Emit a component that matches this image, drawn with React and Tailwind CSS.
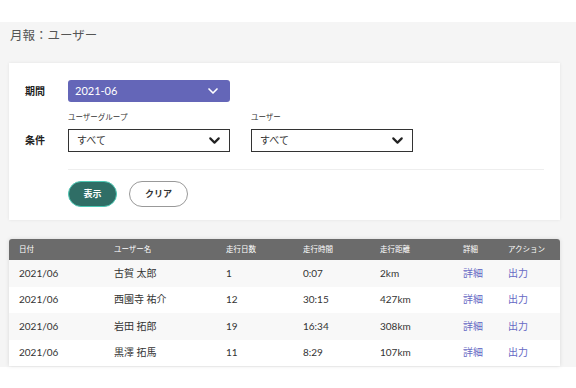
import { ChevronDown } from 'lucide-react'

const FONT = { fontFamily: 'Lato, "Noto Sans CJK JP", sans-serif' }

const ROWS = [
  { date: '2021/06', name: '古賀 太郎', days: '1', time: '0:07', dist: '2km' },
  { date: '2021/06', name: '西園寺 祐介', days: '12', time: '30:15', dist: '427km' },
  { date: '2021/06', name: '岩田 拓郎', days: '19', time: '16:34', dist: '308km' },
  { date: '2021/06', name: '黒澤 拓馬', days: '11', time: '8:29', dist: '107km' },
]

function Select({ value }) {
  return (
    <div className="w-[162px] h-[23px] border-[1.5px] border-[#333] bg-white flex items-center justify-between pl-[8px] pr-[6px]">
      <span className="text-[10px] text-[#333]">{value}</span>
      <ChevronDown size={17} strokeWidth={3} className="text-[#222]" />
    </div>
  )
}

export default function App() {
  return (
    <div style={FONT} className="w-[576px] h-[388px] bg-white overflow-hidden">
      <div className="mt-[22px] h-[345px] bg-[#f5f5f5] pt-[5px]">
        <h1 className="pl-[10px] text-[12.5px] leading-[18px] text-[#555]">月報：ユーザー</h1>

        {/* Search card */}
        <div className="ml-[9px] mr-[16px] mt-[18px] bg-white shadow-[0_0_3px_rgba(0,0,0,0.08)] px-[16px] pt-[17px] pb-[13px]">
          <div className="flex items-center">
            <div className="w-[43px] text-[10px] font-bold text-[#222]">期間</div>
            <div className="w-[162px] h-[22px] rounded-[3px] bg-[#6466b8] flex items-center justify-between pl-[7px] pr-[9px]">
              <span className="text-[11px] text-white">2021-06</span>
              <ChevronDown size={16} strokeWidth={2.5} className="text-white" />
            </div>
          </div>

          <div className="flex items-end mt-[11px]">
            <div className="w-[43px] h-[23px] flex items-center text-[10px] font-bold text-[#222]">条件</div>
            <div className="flex gap-[21px]">
              <div>
                <div className="text-[7.5px] leading-[10px] mb-[6px] text-[#333]">ユーザーグループ</div>
                <Select value="すべて" />
              </div>
              <div>
                <div className="text-[7.5px] leading-[10px] mb-[6px] text-[#333]">ユーザー</div>
                <Select value="すべて" />
              </div>
            </div>
          </div>

          <div className="ml-[43px] mt-[17px] h-[1px] bg-[#eeeeee]" />

          <div className="ml-[43px] mt-[11px] flex gap-[12px]">
            <button className="w-[49px] h-[26px] rounded-full bg-[#2f6e66] border-[1.5px] border-[#4cc8b4] text-white text-[9px] font-bold">
              表示
            </button>
            <button className="w-[59px] h-[26px] rounded-full bg-white border-[1.5px] border-[#999] text-[#333] text-[9px] font-bold">
              クリア
            </button>
          </div>
        </div>

        {/* Table */}
        <div className="ml-[9px] mr-[16px] mt-[19px] shadow-[0_0_4px_rgba(0,0,0,0.12)] rounded-t-[3px] overflow-hidden">
          <div className="h-[21px] bg-[#6b6b6b] flex items-center text-[7.5px] text-white">
            <div className="w-[105px] pl-[10px]">日付</div>
            <div className="w-[112px]">ユーザー名</div>
            <div className="w-[77px]">走行日数</div>
            <div className="w-[77px]">走行時間</div>
            <div className="w-[83px]">走行距離</div>
            <div className="w-[45px]">詳細</div>
            <div className="flex-1">アクション</div>
          </div>
          {ROWS.map((r, i) => (
            <div
              key={i}
              className={`h-[26.5px] flex items-center text-[10px] text-[#333] ${i % 2 === 0 ? 'bg-[#f8f8f8]' : 'bg-white'}`}
            >
              <div className="w-[105px] pl-[10px]">{r.date}</div>
              <div className="w-[112px]">{r.name}</div>
              <div className="w-[77px]">{r.days}</div>
              <div className="w-[77px]">{r.time}</div>
              <div className="w-[83px]">{r.dist}</div>
              <div className="w-[45px] text-[#6668c4]">詳細</div>
              <div className="flex-1 text-[#6668c4]">出力</div>
            </div>
          ))}
        </div>
      </div>
    </div>
  )
}
